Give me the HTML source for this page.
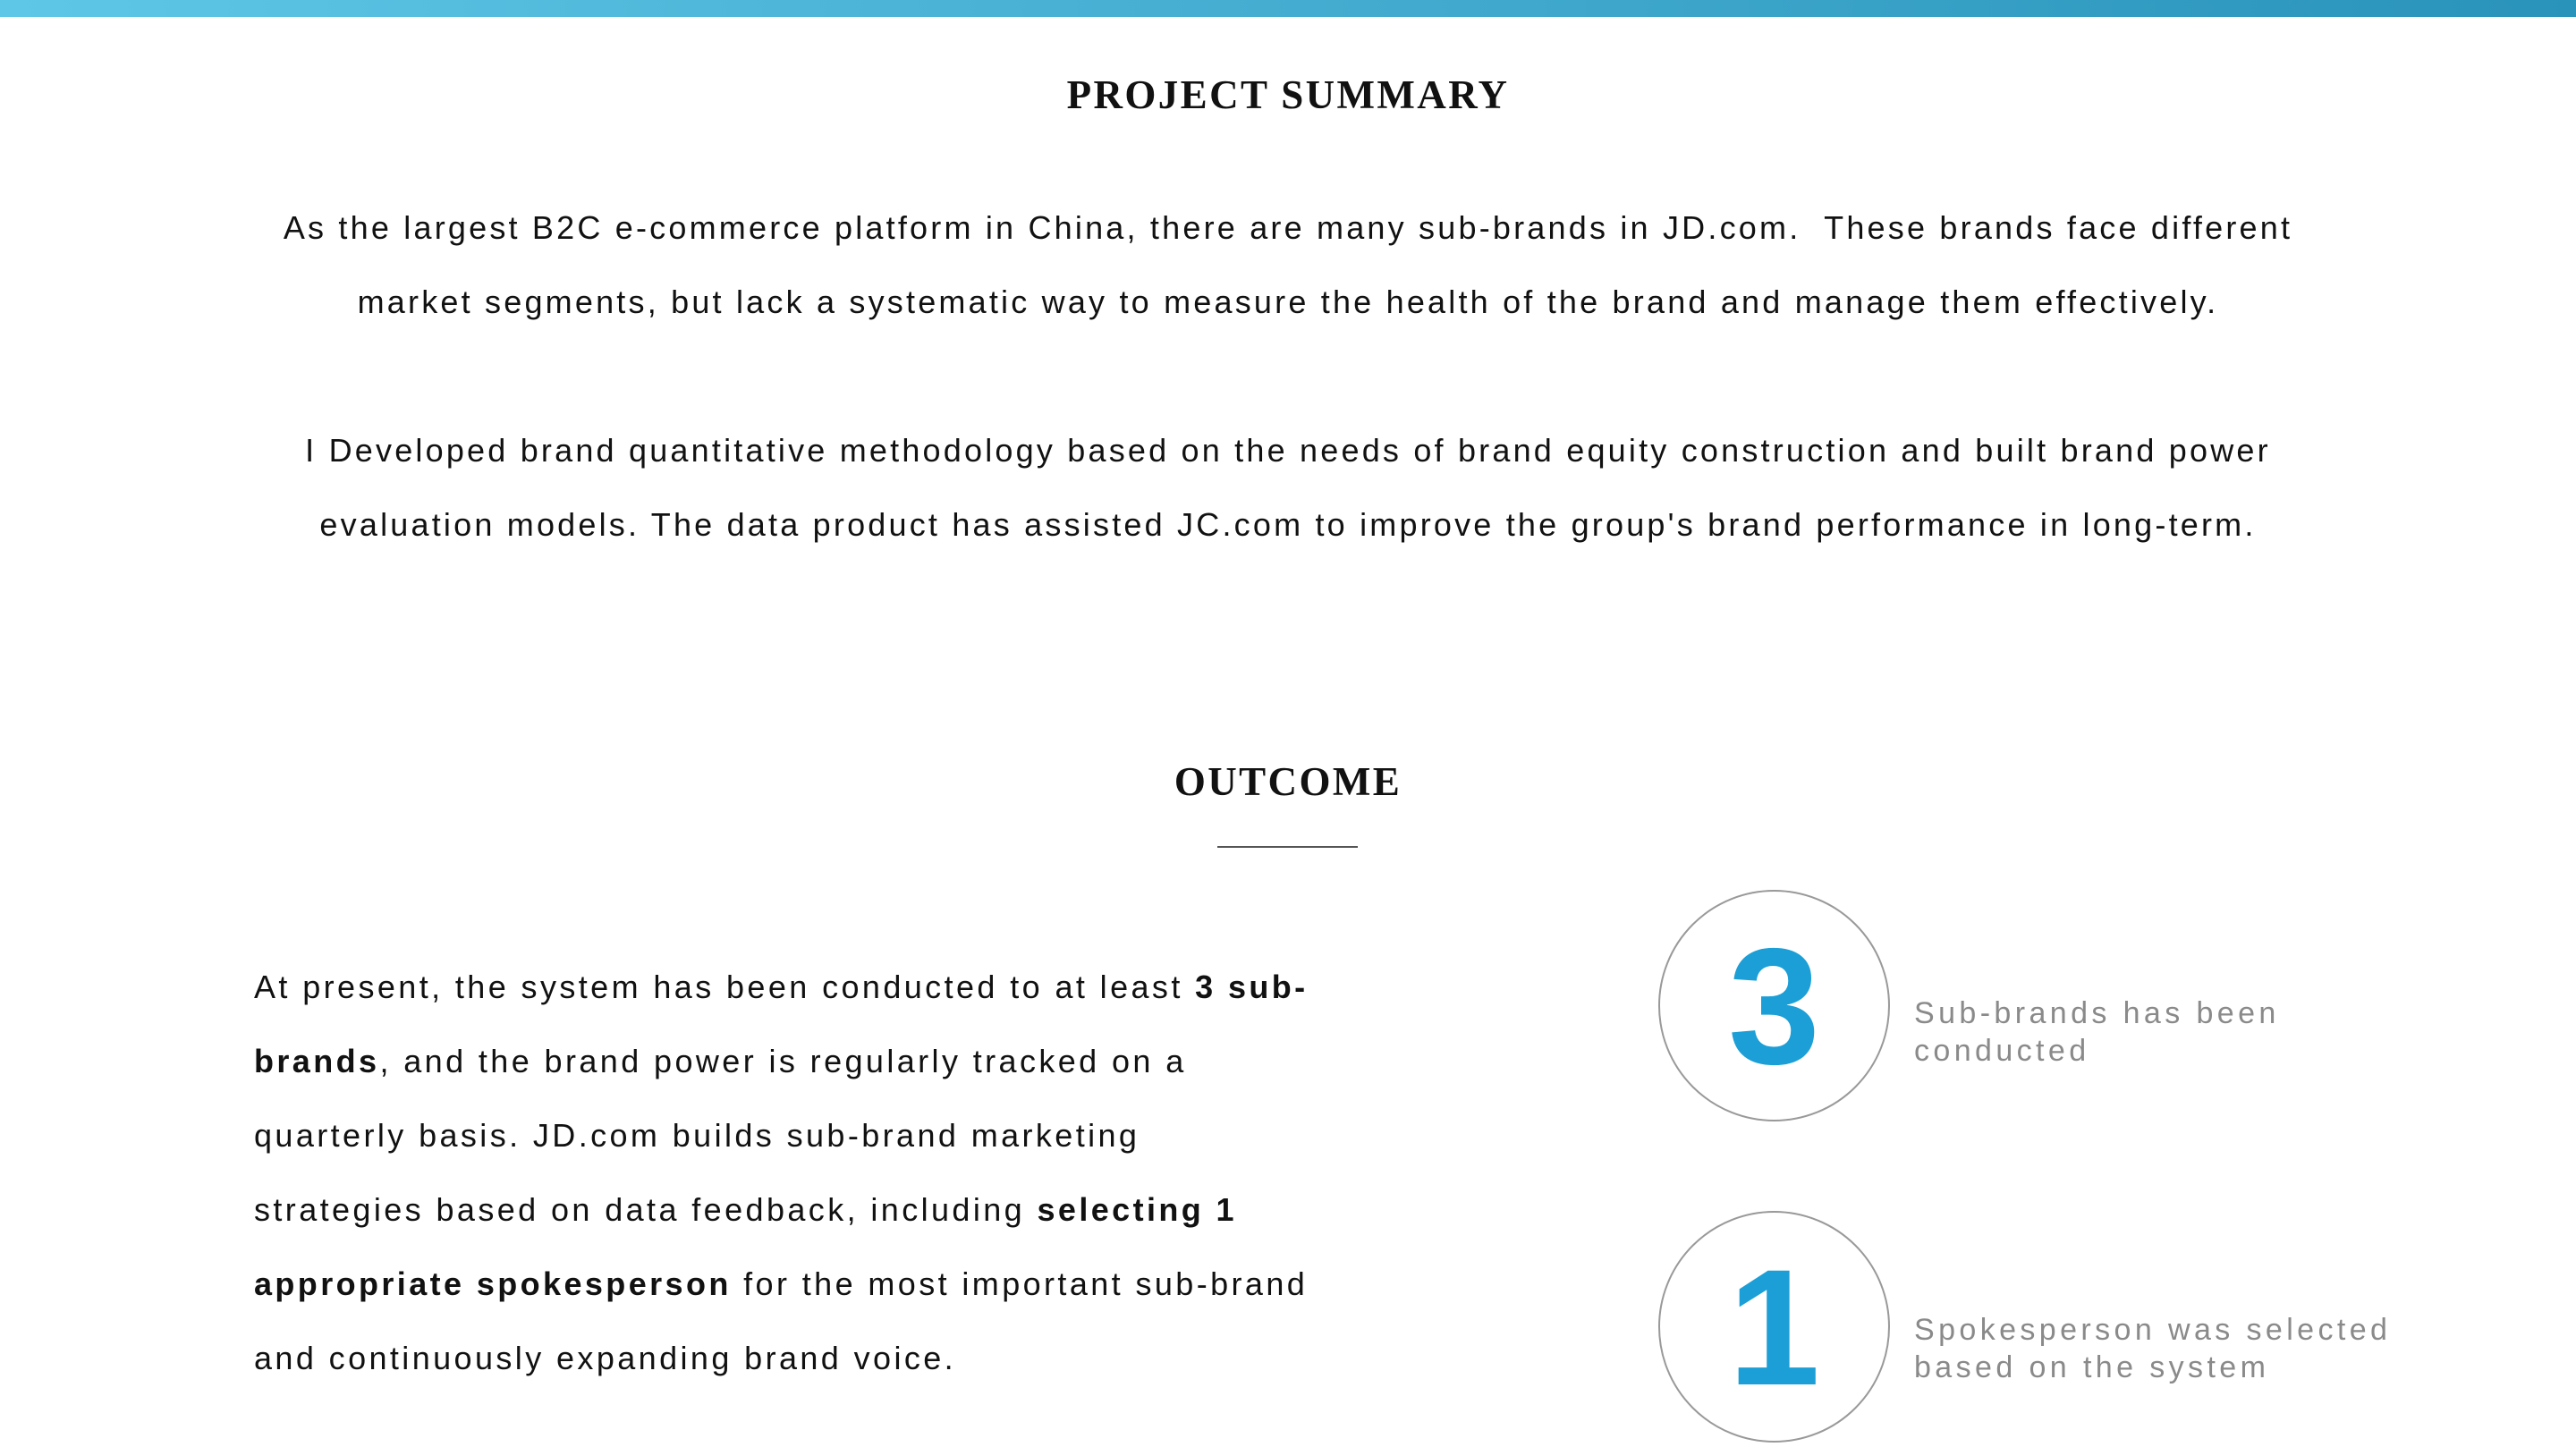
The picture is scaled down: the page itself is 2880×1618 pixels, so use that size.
<!DOCTYPE html>
<html><head><meta charset="utf-8"><style>
*{margin:0;padding:0;box-sizing:border-box}
body{width:2880px;height:1618px;background:#fff;position:relative;overflow:hidden;font-family:"Liberation Sans",Arial,sans-serif;color:#111}
.bar{position:absolute;left:0;top:0;width:2880px;height:19px;background:linear-gradient(90deg,#5ec6e6,#2a93ba)}
h2{position:absolute;left:0;width:2880px;text-align:center;font-family:"Liberation Serif",serif;font-weight:bold;font-size:45px;letter-spacing:2.4px;color:#111}
.p{position:absolute;left:0;width:2880px;text-align:center;font-size:36px;letter-spacing:3.2px;line-height:83px}
.rule{position:absolute;left:1361px;top:946px;width:157px;height:2px;background:#555}
.left{position:absolute;left:284px;top:1062px;width:1400px;font-size:36px;letter-spacing:3.4px;line-height:83px}
.c{position:absolute;width:259px;height:259px;border:2px solid #999;border-radius:50%;text-align:center;font-weight:bold;color:#1b9fd6;font-size:185px;line-height:259px}
.lab{position:absolute;left:2140px;font-size:34px;letter-spacing:4.4px;color:#8a8a8a;line-height:42px}
</style></head><body>
<div class="bar"></div>
<h2 style="top:80px">PROJECT SUMMARY</h2>
<div class="p" style="top:213px">As the largest B2C e-commerce platform in China, there are many sub-brands in JD.com.&nbsp; These brands face different<br>market segments, but lack a systematic way to measure the health of the brand and manage them effectively.</div>
<div class="p" style="top:462px">I Developed brand quantitative methodology based on the needs of brand equity construction and built brand power<br>evaluation models. The data product has assisted JC.com to improve the group's brand performance in long-term.</div>
<h2 style="top:848px">OUTCOME</h2>
<div class="rule"></div>
<div class="left">At present, the system has been conducted to at least <b>3 sub-<br>brands</b>, and the brand power is regularly tracked on a<br>quarterly basis. JD.com builds sub-brand marketing<br>strategies based on data feedback, including <b>selecting 1<br>appropriate spokesperson</b> for the most important sub-brand<br>and continuously expanding brand voice.</div>
<div class="c" style="left:1854px;top:995px">3</div>
<div class="lab" style="top:1112px">Sub-brands has been<br>conducted</div>
<div class="c" style="left:1854px;top:1354px">1</div>
<div class="lab" style="top:1466px">Spokesperson was selected<br>based on the system</div>
</body></html>
